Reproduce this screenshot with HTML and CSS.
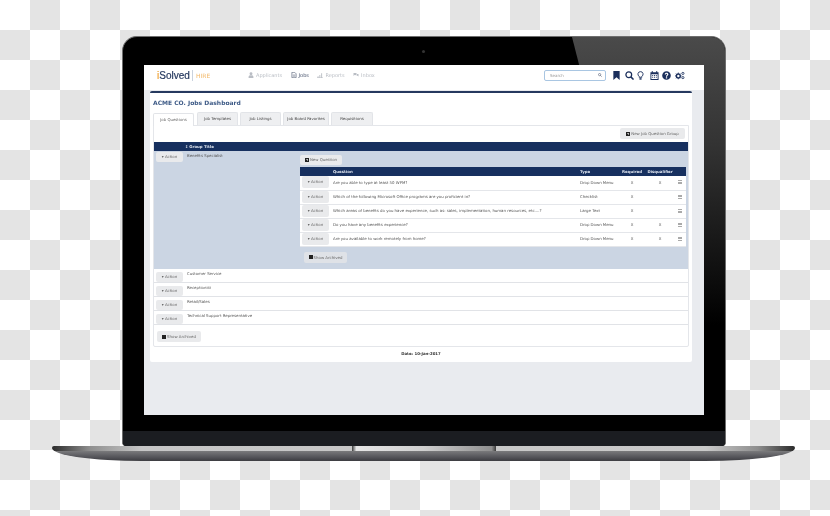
FILE: index.html
```html
<!DOCTYPE html>
<html lang="en">
<head>
    <meta charset="UTF-8">
    <meta name="viewport" content="width=device-width, initial-scale=1.0">
    <title>Jobs Dashboard</title>
    <link rel="stylesheet" href="styles.css">
</head>
<body>
    <div class="laptop">
        <div class="lid">
            <div class="glare"></div>
            <div class="camera"></div>
            <div class="screen">
                <div class="topbar">
                    <div class="logo"><span class="logo-i">i</span>Solved</div>
                    <div class="product">HIRE</div>
                    <nav class="nav">
                        <a class="nav-link">
                            <svg viewBox="0 0 10 10"><circle cx="5" cy="3" r="2.4"/><path d="M1 10V8q0-2.4 4-2.4T9 8v2z"/></svg>
                            Applicants
                        </a>
                        <a class="nav-link active">
                            <svg viewBox="0 0 10 10"><path d="M1.5.5h4.5l2.500 2.500v6.500h-7z" fill="none" stroke="currentColor"/><path d="M3 5h4M3 7h4" stroke="currentColor" stroke-width=".8"/></svg>
                            Jobs
                        </a>
                        <a class="nav-link">
                            <svg viewBox="0 0 10 10"><path d="M0 9h10v1H0zM1 7h1.500v2H1zM4 5h1.500v4H4zM7 2h1.500v7H7z"/></svg>
                            Reports
                        </a>
                        <a class="nav-link">
                            <svg viewBox="0 0 12 10"><path d="M1 1h6v4H3L1 7zM8 3h3v5l-2-1.500H5V6h3z"/></svg>
                            Inbox
                        </a>
                    </nav>
                    <div class="search">
                        <span>Search</span>
                        <svg viewBox="0 0 10 10"><circle cx="4" cy="4" r="2.800" fill="none" stroke="currentColor" stroke-width="1.400"/><path d="M6 6l3 3" stroke="currentColor" stroke-width="1.600"/></svg>
                    </div>
                    <div class="tools">
                        <svg class="tool" viewBox="0 0 10 10"><path d="M1.500 0h7v10L5 7l-3.500 3z"/></svg>
                        <svg class="tool" viewBox="0 0 10 10"><circle cx="4.200" cy="4.200" r="3.200" fill="none" stroke="currentColor" stroke-width="1.400"/><path d="M6.500 6.500L9.500 9.500" stroke="currentColor" stroke-width="1.700"/></svg>
                        <svg class="tool tool-bulb" viewBox="0 0 10 10"><path d="M5 .7a2.800 2.800 0 0 0-1.500 5.200V7h3V5.900A2.800 2.800 0 0 0 5 .7z" fill="none" stroke="currentColor"/><path d="M3.800 8h2.400v1.600H3.800z"/></svg>
                        <svg class="tool" viewBox="0 0 10 10"><path d="M2 0h1v1.500h4V0h1v1.500h1.500V10H.5V1.500H2zM1.500 3.500v5.500h7V3.500z"/><path d="M2.500 4.500h1v1h-1zM4.500 4.500h1v1h-1zM6.500 4.500h1v1h-1zM2.500 6.500h1v1h-1zM4.500 6.500h1v1h-1zM6.500 6.500h1v1h-1z"/></svg>
                        <svg class="tool" viewBox="0 0 10 10"><path fill-rule="evenodd" d="M5 .2a4.800 4.800 0 1 0 0 9.600A4.800 4.800 0 0 0 5 .2zM4.300 7h1.400v1.300H4.300zM3 3.800C3 2.500 4 1.900 5 1.900c1.200 0 2.100.7 2.100 1.800 0 1.500-1.500 1.400-1.500 2.600H4.400c0-1.800 1.300-1.700 1.300-2.500 0-.4-.3-.7-.7-.7-.5 0-.8.300-.8.700z"/></svg>
                        <svg class="tool tool-wide" viewBox="0 0 12 10"><circle cx="4" cy="5.500" r="2.300" fill="none" stroke="currentColor" stroke-width="1.700"/><path d="M4 1.500v1.500M4 8v1.500M0 5.500h1.500M6.500 5.500H8M1.200 2.700l1 1M5.800 7.300l1 1M1.200 8.300l1-1M5.800 3.700l1-1" stroke="currentColor" stroke-width="1"/><circle cx="9.500" cy="2.500" r="1.300" fill="none" stroke="currentColor"/><circle cx="9.500" cy="7.500" r="1.300" fill="none" stroke="currentColor"/></svg>
                    </div>
                </div>

                <div class="page">
                    <div class="card">
                        <h1 class="title">ACME CO. Jobs Dashboard</h1>
                        <div class="tabs">
                            <div class="tab active">Job Questions</div>
                            <div class="tab">Job Templates</div>
                            <div class="tab">Job Listings</div>
                            <div class="tab tab-wide">Job Board Favorites</div>
                            <div class="tab">Requisitions</div>
                        </div>
                        <div class="tab-body">
                            <div class="toolbar">
                                <div class="btn btn-group"><i class="plus"></i>New Job Question Group</div>
                            </div>

                            <div class="group-head"><span class="sort">&#8597;</span>Group Title</div>

                            <div class="group open">
                                <div class="btn btn-action">&#9662; Action</div>
                                <div class="group-name">Benefits Specialist</div>
                                <div class="questions">
                                    <div class="btn btn-new"><i class="plus"></i>New Question</div>
                                    <table class="q-table">
                                        <thead>
                                            <tr>
                                                <th class="col-action"></th>
                                                <th class="col-q">Question</th>
                                                <th class="col-type">Type</th>
                                                <th class="col-req">Required</th>
                                                <th class="col-dis">Disqualifier</th>
                                                <th class="col-menu"></th>
                                            </tr>
                                        </thead>
                                        <tbody>
                                            <tr>
                                                <td><div class="btn btn-action">&#9662; Action</div></td>
                                                <td>Are you able to type at least 50 WPM?</td>
                                                <td>Drop Down Menu</td>
                                                <td class="mid">X</td>
                                                <td class="mid">X</td>
                                                <td class="mid"><i class="bars"></i></td>
                                            </tr>
                                            <tr>
                                                <td><div class="btn btn-action">&#9662; Action</div></td>
                                                <td>Which of the following Microsoft Office programs are you proficient in?</td>
                                                <td>Checklist</td>
                                                <td class="mid">X</td>
                                                <td class="mid"></td>
                                                <td class="mid"><i class="bars"></i></td>
                                            </tr>
                                            <tr>
                                                <td><div class="btn btn-action">&#9662; Action</div></td>
                                                <td>Which areas of benefits do you have experience, such as: sales, implementation, human resources, etc....?</td>
                                                <td>Large Text</td>
                                                <td class="mid">X</td>
                                                <td class="mid"></td>
                                                <td class="mid"><i class="bars"></i></td>
                                            </tr>
                                            <tr>
                                                <td><div class="btn btn-action">&#9662; Action</div></td>
                                                <td>Do you have any benefits experience?</td>
                                                <td>Drop Down Menu</td>
                                                <td class="mid">X</td>
                                                <td class="mid">X</td>
                                                <td class="mid"><i class="bars"></i></td>
                                            </tr>
                                            <tr>
                                                <td><div class="btn btn-action">&#9662; Action</div></td>
                                                <td>Are you available to work remotely from home?</td>
                                                <td>Drop Down Menu</td>
                                                <td class="mid">X</td>
                                                <td class="mid">X</td>
                                                <td class="mid"><i class="bars"></i></td>
                                            </tr>
                                        </tbody>
                                    </table>
                                    <div class="btn btn-archived"><i class="square"></i>Show Archived</div>
                                </div>
                            </div>

                            <div class="group">
                                <div class="btn btn-action">&#9662; Action</div>
                                <div class="group-name">Customer Service</div>
                            </div>
                            <div class="group">
                                <div class="btn btn-action">&#9662; Action</div>
                                <div class="group-name">Receptionist</div>
                            </div>
                            <div class="group">
                                <div class="btn btn-action">&#9662; Action</div>
                                <div class="group-name">Retail/Sales</div>
                            </div>
                            <div class="group">
                                <div class="btn btn-action">&#9662; Action</div>
                                <div class="group-name">Technical Support Representative</div>
                            </div>

                            <div class="btn btn-archived btn-archived-main"><i class="square"></i>Show Archived</div>
                        </div>
                        <div class="date">Date: 10-Jan-2017</div>
                    </div>
                </div>
            </div>
            <div class="chin"></div>
        </div>
        <div class="base">
            <div class="base-top">
                <div class="hinge"></div>
            </div>
            <div class="base-front"></div>
        </div>
    </div>
</body>
</html>
```

FILE: styles.css
```css
* {
    box-sizing: border-box;
}

html, body {
    margin: 0;
    height: 516px;
    overflow: hidden;
}

body {
    background-color: #fff;
    background-image: conic-gradient(#e4e4e4 25%, #fff 0 50%, #e4e4e4 0 75%, #fff 0);
    background-size: 60px 60px;
    font-family: "DejaVu Sans", sans-serif;
}

/* Laptop frame */
.laptop {
    width: 743px;
    margin-left: 52px;
    padding-top: 36px;
}

.lid {
    position: relative;
    width: 604px;
    height: 410px;
    margin-left: 70px;
    padding: 28px 21px 0 21px;
    background: #000;
    border: 1px solid #6e6e6e;
    border-bottom: 0;
    border-radius: 15px 15px 4px 4px;
    overflow: hidden;
}

.glare {
    position: absolute;
    top: 0;
    right: 0;
    width: 153px;
    height: 360px;
    background: linear-gradient(#4a4a4a, #333 30%, #000 80%);
    clip-path: polygon(0 0, 100% 0, 100% 100%, 60% 100%);
}

.camera {
    position: absolute;
    top: 13px;
    left: 299px;
    width: 3px;
    height: 3px;
    border-radius: 50%;
    background: #333;
}

.chin {
    position: absolute;
    left: 0;
    right: 0;
    bottom: 0;
    height: 15px;
    background: #1b1d21;
}

.base {
    width: 743px;
    height: 15px;
    border-radius: 2px 2px 90px 90px / 2px 2px 13px 13px;
    overflow: hidden;
}

.base-top {
    height: 5px;
    background: linear-gradient(90deg, #2b2b2b, #8d8d8d 5%, #c6c6c6 12%, #c9c9c9 88%, #8d8d8d 95%, #2b2b2b);
}

.hinge {
    width: 144px;
    height: 5px;
    margin-left: 300px;
    background: linear-gradient(90deg, #3a3a3a, #e6e6e6 3%, #cfcfcf 50%, #8f8f8f 97%, #3a3a3a);
}

.base-front {
    height: 10px;
    background: linear-gradient(#7a7a7c, #55555a 60%, #3c3c40);
}

/* Screen */
.screen {
    position: relative;
    width: 560px;
    height: 350px;
    background: #e9ebef;
    color: #555;
    filter: blur(0.3px);
}

.topbar {
    display: flex;
    align-items: center;
    height: 25px;
    padding: 0 0 5px 13px;
    background: #fff;
}

.logo {
    width: 36px;
    border-right: 1px solid #c9d2de;
    color: #26395f;
    font-family: "Liberation Sans", sans-serif;
    font-size: 10px;
    line-height: 11px;
    -webkit-text-stroke: 0.2px #26395f;
}

.logo-i {
    color: #f0a63c;
    -webkit-text-stroke: 0.2px #f0a63c;
}

.product {
    width: 55px;
    padding-left: 3px;
    color: #f2b868;
    font-size: 6px;
}

.nav {
    display: flex;
    width: 296px;
    gap: 8.5px;
}

.nav-link {
    display: flex;
    align-items: center;
    gap: 2px;
    color: #b9bdc4;
    font-size: 5px;
}

.nav-link svg {
    width: 6px;
    height: 6px;
    fill: currentColor;
}

.nav-link.active {
    color: #44506a;
}

.search {
    display: flex;
    align-items: center;
    justify-content: space-between;
    width: 62px;
    height: 11px;
    padding: 0 3px 0 5px;
    border: 1px solid #a9c6e2;
    border-radius: 2px;
    color: #999;
    font-size: 4px;
}

.search svg {
    width: 4px;
    height: 4px;
    color: #44506a;
}

.tools {
    display: flex;
    align-items: center;
    gap: 3.5px;
    margin-left: 6px;
    color: #1b2f5c;
}

.tool {
    display: block;
    width: 9px;
    height: 9px;
    fill: currentColor;
}

.tool-bulb {
    margin: 0 1px 0 -1px;
}

.tool-wide {
    width: 10px;
}

/* Card */
.page {
    padding: 1px 12px 0 6px;
}

.card {
    height: 271px;
    padding: 0 3px;
    background: #fff;
    border-top: 2px solid #26395f;
    border-radius: 2px;
}

.title {
    margin: 0;
    padding-top: 5px;
    height: 19px;
    color: #3d5a86;
    font-size: 6px;
    line-height: 9px;
    font-weight: bold;
}

.tabs {
    display: flex;
    gap: 2px;
    height: 14px;
}

.tab {
    width: 41px;
    height: 13px;
    background: #eeeff1;
    border: 1px solid #e2e4e8;
    border-bottom: 0;
    border-radius: 2px 2px 0 0;
    color: #444;
    font-size: 3.9px;
    line-height: 12px;
    text-align: center;
}

.tab:last-child {
    width: 42px;
}

.tab.active {
    position: relative;
    z-index: 1;
    margin: 1px 1px 0 0;
    background: #fff;
    color: #666;
    line-height: 11px;
}

.tab-wide {
    width: 46px;
}

.tab-body {
    height: 222px;
    margin-top: -1px;
    border: 1px solid #e4e6ea;
    border-radius: 0 0 2px 2px;
}

.toolbar {
    display: flex;
    justify-content: flex-end;
    height: 16px;
    padding: 2px 3px 0 0;
}

.btn {
    background: #e9eaec;
    border-radius: 2px;
    color: #666;
    font-size: 3.9px;
    text-align: center;
}

.btn-group {
    width: 65px;
    height: 11px;
    line-height: 11px;
}

.plus, .square {
    display: inline-block;
    width: 4px;
    height: 4px;
    margin-right: 1px;
    background-color: #222;
    vertical-align: -0.5px;
}

.plus {
    background-image: linear-gradient(#ddd, #ddd), linear-gradient(#ddd, #ddd);
    background-size: 2px 0.6px, 0.6px 2px;
    background-position: center;
    background-repeat: no-repeat;
}

.group-head {
    height: 9px;
    padding-left: 31px;
    background: #17305f;
    color: #dfe5ef;
    font-size: 3.9px;
    font-weight: bold;
    line-height: 9px;
}

.sort {
    margin-right: 1px;
}

.group {
    display: flex;
    align-items: flex-start;
    height: 14px;
    padding: 1px 0 0 2px;
    border-bottom: 1px solid #e1e3e7;
}

.group:not(.open) .btn-action {
    margin-top: 2px;
}

.group.open {
    height: 118px;
    background: #cbd5e3;
    border-bottom: 0;
}

.btn-action {
    flex: none;
    width: 27px;
    height: 10px;
    line-height: 10px;
}

.group-name {
    width: 117px;
    padding: 1px 0 0 4px;
    color: #555;
    font-size: 3.9px;
    line-height: 5px;
}

.questions {
    width: 386px;
    padding-top: 3px;
}

.btn-new {
    width: 42px;
    height: 10px;
    line-height: 10px;
}

/* Question table */
.q-table {
    width: 386px;
    margin-top: 2px;
    border-collapse: collapse;
    table-layout: fixed;
    background: #fff;
    font-size: 3.9px;
}

.q-table th {
    height: 9px;
    padding: 0;
    background: #17305f;
    color: #dfe5ef;
    text-align: left;
    font-weight: bold;
}

.q-table td {
    height: 14px;
    padding: 0 0 1px;
    border-bottom: 1px solid #e4e6ea;
    color: #555;
    white-space: nowrap;
    overflow: hidden;
}

.q-table td .btn-action {
    width: 27px;
    height: 12px;
    margin-left: 2px;
    line-height: 12px;
}

.col-action {
    width: 33px;
}

.col-q {
    width: 247px;
}

.col-type {
    width: 38px;
}

.q-table .col-req, .q-table .col-dis {
    width: 28px;
    text-align: center;
}

.col-menu {
    width: 12px;
}

.mid {
    text-align: center;
}

.bars {
    display: block;
    width: 4px;
    height: 4px;
    margin: 0 auto;
    background: repeating-linear-gradient(#aaa 0 1px, #fff 1px 1.5px);
}

.btn-archived {
    width: 43px;
    height: 11px;
    margin: 5px 0 0 4px;
    background: #dfe2e7;
    line-height: 11px;
}

.btn-archived-main {
    width: 44px;
    margin: 6px 0 0 3px;
    background: #e9eaec;
}

.date {
    margin-top: 4px;
    color: #333;
    font-size: 3.9px;
    font-weight: bold;
    text-align: center;
}
```
